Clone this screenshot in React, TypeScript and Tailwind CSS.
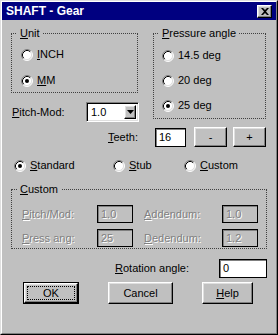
import React from 'react';

// Win95-ish bevels
const raised =
    'bg-[#c0c0c0] border border-t-white border-l-white border-r-black border-b-black shadow-[inset_-1px_-1px_0_#808080,inset_1px_1px_0_#dfdfdf]';
const field = 'bg-white border border-black shadow-[inset_1px_1px_0_#808080]';
const fieldOff = 'bg-[#c0c0c0] border border-black shadow-[inset_1px_1px_0_#808080]';
const grey = 'text-[#808080] [text-shadow:1px_1px_0_#fff]';

function K({ children }: { children: React.ReactNode }) {
    return <span className="underline">{children}</span>;
}

function Radio({ checked }: { checked?: boolean }) {
    return (
        <svg width="12" height="12" viewBox="0 0 12 12" className="shrink-0">
            <circle cx="6" cy="6" r="5" fill="#fff" />
            <path d="M2.11 9.89A5.5 5.5 0 0 1 9.89 2.11" fill="none" stroke="#808080" />
            <path d="M9.89 2.11A5.5 5.5 0 0 1 2.11 9.89" fill="none" stroke="#fff" />
            <path d="M2.82 9.18A4.5 4.5 0 0 1 9.18 2.82" fill="none" stroke="#000" />
            <path d="M9.18 2.82A4.5 4.5 0 0 1 2.82 9.18" fill="none" stroke="#dfdfdf" />
            {checked && <circle cx="6" cy="6" r="2" fill="#000" />}
        </svg>
    );
}

function RadioItem({ checked, children, className = '' }: { checked?: boolean; children: React.ReactNode; className?: string }) {
    return (
        <div className={`flex items-center gap-[4px] h-[13px] ${className}`}>
            <Radio checked={checked} />
            <span>{children}</span>
        </div>
    );
}

export default function App() {
    return (
        <div className="w-[278px] h-[335px] bg-[#c0c0c0] font-['Liberation_Sans',Arial,sans-serif] text-[11px] leading-[13px] text-black">
            <div className="h-full border border-t-[#dfdfdf] border-l-[#dfdfdf] border-r-black border-b-black">
                <div className="h-full border border-t-white border-l-white border-r-[#808080] border-b-[#808080] flex flex-col">
                    {/* title bar */}
                    <div className="h-[18px] bg-[#000080] flex items-center pl-[4px] pr-[4px]">
                        <span className="text-white font-bold text-[12px] leading-[14px]">SHAFT - Gear</span>
                        <div className={`ml-auto w-[15px] h-[13px] flex items-center justify-center ${raised}`}>
                            <svg width="8" height="7" viewBox="0 0 8 7">
                                <path d="M0 0h2l2 2 2-2h2L5 3.5 8 7H6L4 5 2 7H0l3-3.5z" fill="#000" />
                            </svg>
                        </div>
                    </div>

                    <div className="flex flex-col pl-[9px] w-[265px]">
                        {/* unit / pressure */}
                        <div className="flex items-start mt-[7px]">
                            <div className="flex flex-col w-[142px]">
                                <fieldset className="w-[127px] border border-dotted border-[#404040]">
                                    <legend className="ml-[5px] px-[3px] leading-[13px]">
                                        <K>U</K>nit
                                    </legend>
                                    <div className="flex flex-col gap-[13px] pl-[9px] pt-[8px] pb-[5px]">
                                        <RadioItem><K>I</K>NCH</RadioItem>
                                        <RadioItem checked><K>M</K>M</RadioItem>
                                    </div>
                                </fieldset>
                                <div className="flex items-center mt-[9px] pl-[1px]">
                                    <span className="w-[74px]"><K>P</K>itch-Mod:</span>
                                    <div className="w-[53px] h-[20px] flex items-center bg-white border border-t-[#808080] border-l-[#808080] border-r-white border-b-white shadow-[inset_1px_1px_0_#000,inset_-1px_-1px_0_#dfdfdf] p-[2px]">
                                        <span className="pl-[2px]">1.0</span>
                                        <div className={`ml-auto w-[12px] h-full flex items-center justify-center ${raised}`}>
                                            <svg width="7" height="4" viewBox="0 0 7 4">
                                                <path d="M0 0h7L3.5 4z" fill="#000" />
                                            </svg>
                                        </div>
                                    </div>
                                </div>
                            </div>
                            <fieldset className="w-[113px] border border-dotted border-[#404040]">
                                <legend className="ml-[5px] px-[3px] leading-[13px]">
                                    <K>P</K>ressure angle
                                </legend>
                                <div className="flex flex-col gap-[12px] pl-[8px] pt-[9px] pb-[6px]">
                                    <RadioItem>14.5 deg</RadioItem>
                                    <RadioItem>20 deg</RadioItem>
                                    <RadioItem checked>25 deg</RadioItem>
                                </div>
                            </fieldset>
                        </div>

                        {/* teeth */}
                        <div className="flex items-center mt-[5px] h-[20px] pl-[97px]">
                            <span className="w-[47px]"><K>T</K>eeth:</span>
                            <div className={`w-[31px] h-[19px] flex items-center pl-[3px] ${field}`}>16</div>
                            <div className={`ml-[8px] w-[33px] h-[20px] flex items-center justify-center ${raised}`}>-</div>
                            <div className={`ml-[6px] w-[33px] h-[20px] flex items-center justify-center ${raised}`}>+</div>
                        </div>

                        {/* tooth form */}
                        <div className="flex items-center mt-[12px] pl-[3px]">
                            <RadioItem checked className="w-[99px]"><K>S</K>tandard</RadioItem>
                            <RadioItem className="w-[71px]"><K>S</K>tub</RadioItem>
                            <RadioItem><K>C</K>ustom</RadioItem>
                        </div>

                        {/* custom */}
                        <fieldset className="mt-[11px] w-[256px] border border-dotted border-[#404040]">
                            <legend className="ml-[5px] px-[3px] leading-[13px]">
                                <K>C</K>ustom
                            </legend>
                            <div className="flex flex-col gap-[6px] pl-[10px] pt-[9px] pb-[1px]">
                                <div className="flex items-center h-[18px]">
                                    <span className={`w-[75px] ${grey}`}><K>P</K>itch/Mod:</span>
                                    <div className={`w-[36px] h-[18px] flex items-center pl-[3px] ${fieldOff} ${grey}`}>1.0</div>
                                    <span className={`ml-[11px] w-[78px] ${grey}`}><K>A</K>ddendum:</span>
                                    <div className={`w-[36px] h-[18px] flex items-center pl-[3px] ${fieldOff} ${grey}`}>1.0</div>
                                </div>
                                <div className="flex items-center h-[18px]">
                                    <span className={`w-[75px] ${grey}`}><K>P</K>ress ang:</span>
                                    <div className={`w-[36px] h-[18px] flex items-center pl-[3px] ${fieldOff} ${grey}`}>25</div>
                                    <span className={`ml-[11px] w-[78px] ${grey}`}><K>D</K>edendum:</span>
                                    <div className={`w-[36px] h-[18px] flex items-center pl-[3px] ${fieldOff} ${grey}`}>1.2</div>
                                </div>
                            </div>
                        </fieldset>

                        {/* rotation */}
                        <div className="flex items-center mt-[10px] h-[19px] pl-[104px]">
                            <span><K>R</K>otation angle:</span>
                            <div className={`ml-auto w-[48px] h-[19px] flex items-center pl-[3px] ${field}`}>0</div>
                        </div>

                        {/* buttons */}
                        <div className="flex items-center mt-[4px] pl-[12px] gap-[29px]">
                            <div className="w-[56px] h-[22px] border border-black">
                                <div className={`h-full w-full p-[2px] ${raised}`}>
                                    <div className="h-full w-full flex items-center justify-center border border-dotted border-black">
                                        OK
                                    </div>
                                </div>
                            </div>
                            <div className={`w-[65px] h-[22px] flex items-center justify-center ${raised}`}>Cancel</div>
                            <div className={`w-[51px] h-[22px] flex items-center justify-center ${raised}`}>
                                <span><K>H</K>elp</span>
                            </div>
                        </div>
                    </div>
                </div>
            </div>
        </div>
    );
}
